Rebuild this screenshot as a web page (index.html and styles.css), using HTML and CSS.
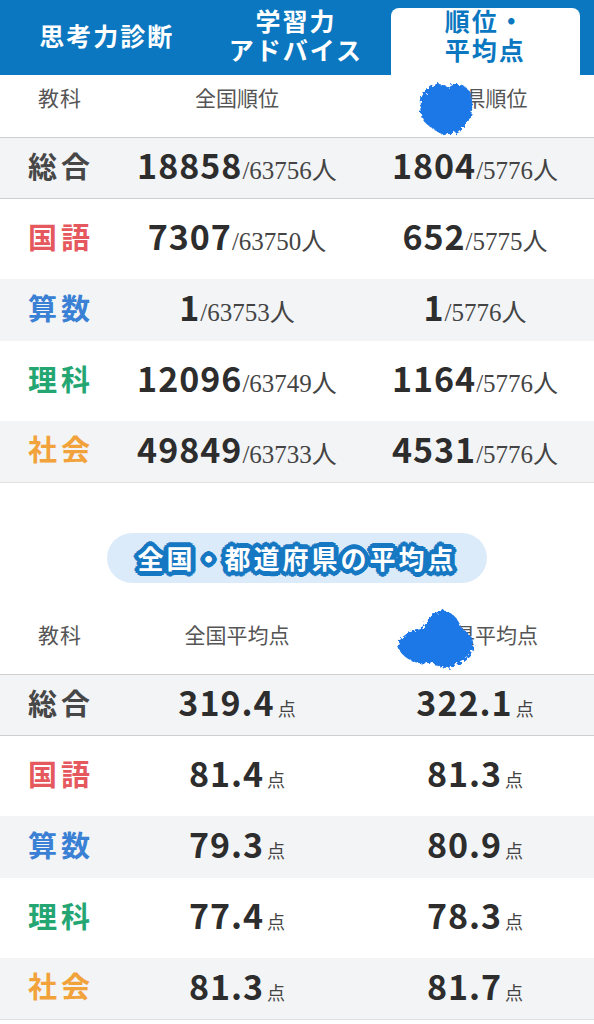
FILE: index.html
```html
<!DOCTYPE html>
<html lang="ja">
<head>
    <meta charset="UTF-8">
    <meta name="viewport" content="width=device-width, initial-scale=1.0">
    <title>順位・平均点</title>
    <link rel="stylesheet" href="styles.css">
</head>
<body>
    <svg class="defs" width="0" height="0">
        <filter id="rough" x="-20%" y="-20%" width="140%" height="140%">
            <feTurbulence type="fractalNoise" baseFrequency="0.3" numOctaves="2" seed="3"/>
            <feDisplacementMap in="SourceGraphic" scale="7"/>
        </filter>
    </svg>

    <header class="tabs">
        <div class="tab">思考力診断</div>
        <div class="tab">学習力<br>アドバイス</div>
        <div class="tab active">順位・<br>平均点</div>
    </header>

    <!-- 順位 -->
    <section class="table">
        <div class="head">
            <span class="subject">教科</span>
            <span class="col">全国順位</span>
            <span class="col"><span class="hidden-name"><svg class="blot blot-a" viewBox="0 0 100 100" preserveAspectRatio="none"><path d="M20 20 C35 5 48 14 55 18 C66 6 86 12 91 30 C98 50 93 74 76 86 C64 98 44 100 34 89 C15 82 4 64 8 45 C8 33 12 25 20 20Z"/></svg></span>県順位</span>
        </div>
        <div class="row alt first">
            <span class="subject total">総合</span>
            <span class="col"><b>18858</b><i>/63756人</i></span>
            <span class="col"><b>1804</b><i>/5776人</i></span>
        </div>
        <div class="row">
            <span class="subject jp">国語</span>
            <span class="col"><b>7307</b><i>/63750人</i></span>
            <span class="col"><b>652</b><i>/5775人</i></span>
        </div>
        <div class="row alt">
            <span class="subject math">算数</span>
            <span class="col"><b>1</b><i>/63753人</i></span>
            <span class="col"><b>1</b><i>/5776人</i></span>
        </div>
        <div class="row">
            <span class="subject sci">理科</span>
            <span class="col"><b>12096</b><i>/63749人</i></span>
            <span class="col"><b>1164</b><i>/5776人</i></span>
        </div>
        <div class="row alt last">
            <span class="subject soc">社会</span>
            <span class="col"><b>49849</b><i>/63733人</i></span>
            <span class="col"><b>4531</b><i>/5776人</i></span>
        </div>
    </section>

    <div class="pill-wrap">
        <h2 class="pill">全国・都道府県の平均点</h2>
    </div>

    <!-- 平均点 -->
    <section class="table">
        <div class="head">
            <span class="subject">教科</span>
            <span class="col">全国平均点</span>
            <span class="col"><span class="hidden-name"><svg class="blot blot-b" viewBox="0 0 100 100" preserveAspectRatio="none"><path d="M5 56 C10 42 24 38 34 35 C40 20 50 4 62 8 C72 10 78 25 82 36 C92 42 98 56 95 68 C92 80 80 90 70 95 C60 100 50 93 45 88 C35 93 20 88 12 79 C5 72 2 62 5 56Z"/></svg></span>県平均点</span>
        </div>
        <div class="row alt first">
            <span class="subject total">総合</span>
            <span class="col"><b>319.4</b><small>点</small></span>
            <span class="col"><b>322.1</b><small>点</small></span>
        </div>
        <div class="row">
            <span class="subject jp">国語</span>
            <span class="col"><b>81.4</b><small>点</small></span>
            <span class="col"><b>81.3</b><small>点</small></span>
        </div>
        <div class="row alt">
            <span class="subject math">算数</span>
            <span class="col"><b>79.3</b><small>点</small></span>
            <span class="col"><b>80.9</b><small>点</small></span>
        </div>
        <div class="row">
            <span class="subject sci">理科</span>
            <span class="col"><b>77.4</b><small>点</small></span>
            <span class="col"><b>78.3</b><small>点</small></span>
        </div>
        <div class="row alt last">
            <span class="subject soc">社会</span>
            <span class="col"><b>81.3</b><small>点</small></span>
            <span class="col"><b>81.7</b><small>点</small></span>
        </div>
    </section>
</body>
</html>
```

FILE: styles.css
```css
body{
    margin: 0;
    font-family: "Noto Sans CJK JP", "Noto Sans", sans-serif;
    background-color: white;
    color: #2d2d2d;
}
.defs{
    position: absolute;
}
.tabs{
    display: grid;
    grid-template-columns: repeat(3, 1fr);
    height: 75px;
    padding: 8px 14px 0 12px;
    box-sizing: border-box;
    background-color: #0a77c0;
}
.tab{
    display: flex;
    justify-content: center;
    align-items: center;
    padding-bottom: 9px;
    color: white;
    font-family: "Liberation Sans", "Noto Sans CJK JP", sans-serif;
    font-size: 25px;
    font-weight: 700;
    line-height: 29px;
    letter-spacing: 2px;
    text-align: center;
}
.tab.active{
    background-color: white;
    color: #0a77c0;
    border-radius: 8px 8px 0 0;
}
.table{
    display: flex;
    flex-direction: column;
}
.head, .row{
    display: grid;
    grid-template-columns: 118px 1fr 1fr;
}
.head{
    height: 62px;
    padding-top: 10px;
    box-sizing: border-box;
    font-size: 21px;
    line-height: 24px;
    color: #555;
}
.head .subject{
    padding-left: 38px;
}
.col{
    display: flex;
    justify-content: center;
    align-items: baseline;
}
.head .col{
    align-items: flex-start;
}
.hidden-name{
    position: relative;
    width: 42px;
    height: 24px;
}
.blot{
    position: absolute;
    fill: #1f78e6;
    filter: url(#rough);
}
.blot-a{
    left: -7px;
    top: -8px;
    width: 60px;
    height: 60px;
}
.blot-b{
    left: -17px;
    top: -16px;
    width: 82px;
    height: 64px;
}
.row{
    height: 80px;
    padding-bottom: 7px;
    box-sizing: border-box;
    align-items: center;
}
.row.alt{
    height: 62px;
    background-color: #f3f4f6;
}
.row.first{
    border-top: 1px solid #cfcfcf;
    border-bottom: 1px solid #cfcfcf;
}
.row.last{
    border-bottom: 1px solid #e0e0e0;
}
.subject{
    padding-left: 28px;
    font-size: 29px;
    font-weight: 700;
    letter-spacing: 4px;
}
.head .subject{
    font-size: 21px;
    font-weight: 400;
    letter-spacing: 1px;
}
.total{ color: #474747; }
.jp{ color: #e5585d; }
.math{ color: #3a80d4; }
.sci{ color: #24a673; }
.soc{ color: #f2a23a; }
.col b{
    font-size: 34px;
    font-weight: 700;
    letter-spacing: 1px;
    color: #2d2d2d;
}
.col i{
    font-style: normal;
    font-family: "Liberation Serif", "Noto Sans CJK JP", serif;
    font-size: 25px;
    color: #444;
}
.col small{
    margin-left: 3px;
    font-size: 18px;
    color: #444;
}
.pill-wrap{
    display: flex;
    justify-content: center;
    margin: 50px 0 29px;
}
.pill{
    margin: 0;
    width: 380px;
    height: 50px;
    border-radius: 25px;
    background-color: #dcebfa;
    text-align: center;
    font-size: 26px;
    font-weight: 700;
    line-height: 50px;
    letter-spacing: 3px;
    color: white;
    text-shadow:
        3px 0 0 #1677c2, -3px 0 0 #1677c2, 0 3px 0 #1677c2, 0 -3px 0 #1677c2,
        2px 2px 0 #1677c2, -2px 2px 0 #1677c2, 2px -2px 0 #1677c2, -2px -2px 0 #1677c2,
        4px 2px 0 #1677c2, -4px 2px 0 #1677c2, 4px -2px 0 #1677c2, -4px -2px 0 #1677c2,
        2px 4px 0 #1677c2, -2px 4px 0 #1677c2, 2px -4px 0 #1677c2, -2px -4px 0 #1677c2,
        4px 0 0 #1677c2, -4px 0 0 #1677c2, 0 4px 0 #1677c2, 0 -4px 0 #1677c2,
        5px 0 0 #1677c2, -5px 0 0 #1677c2, 0 5px 0 #1677c2, 0 -5px 0 #1677c2;
}
```
